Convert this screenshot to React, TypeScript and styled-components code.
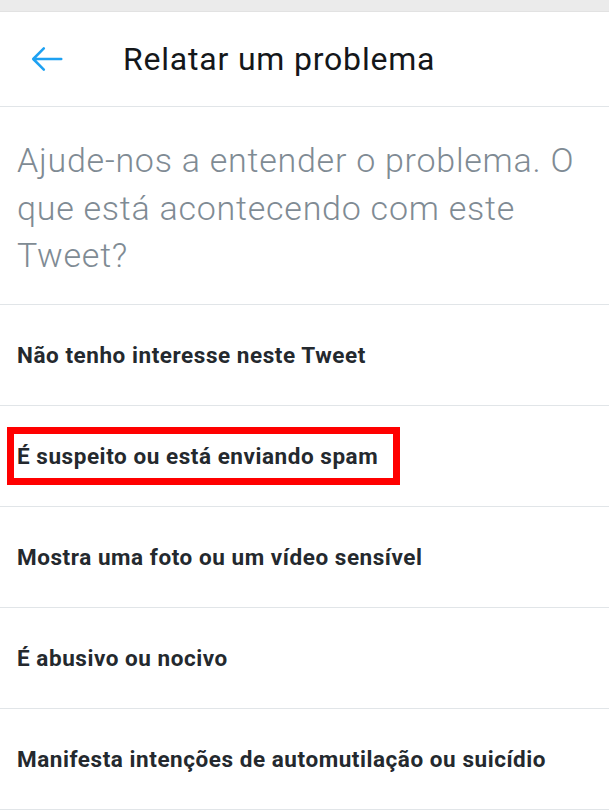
import React from 'react';
import styled, { createGlobalStyle } from 'styled-components';

const GlobalStyle = createGlobalStyle`
  html, body {
    margin: 0;
    padding: 0;
    background: #ffffff;
  }
  body {
    font-family: Roboto, 'Liberation Sans', sans-serif;
  }
`;

const Page = styled.div`
  width: 609px;
  height: 812px;
  overflow: hidden;
  background: #ffffff;
`;

const StatusStrip = styled.div`
  height: 11px;
  background: #ebebeb;
  border-bottom: 1px solid #e2e2e2;
`;

const Header = styled.header`
  display: flex;
  align-items: center;
  height: 94px;
  padding-left: 28px;
  border-bottom: 1px solid #e1e5e8;
`;

const BackButton = styled.button`
  display: flex;
  align-items: center;
  justify-content: center;
  width: 38px;
  height: 38px;
  padding: 0;
  margin: 0 57px 0 0;
  border: none;
  background: none;
  color: #1da1f2;
`;

const Title = styled.h1`
  margin: 0;
  font-size: 32px;
  font-weight: 400;
  color: #14171a;
  letter-spacing: 0.8px;
`;

const Intro = styled.p`
  margin: 0;
  padding: 30px 24px 24px 17px;
  font-size: 34px;
  font-weight: 300;
  line-height: 47.5px;
  letter-spacing: 0.75px;
  color: #7f8b94;
  border-bottom: 1px solid #e1e5e8;
`;

const List = styled.ul`
  margin: 0;
  padding: 0;
  list-style: none;
`;

const Row = styled.li`
  display: flex;
  align-items: center;
  height: 100px;
  padding-left: 17px;
  border-bottom: 1px solid #e1e5e8;
  font-size: 22.5px;
  font-weight: 700;
  letter-spacing: 0.55px;
  color: #24292e;
`;

const Highlight = styled.span`
  margin-left: -10px;
  padding: 0 15px 0 3px;
  line-height: 44px;
  border: 7px solid #ff0000;
`;

const reasons = [
  { label: 'Não tenho interesse neste Tweet' },
  { label: 'É suspeito ou está enviando spam', marked: true },
  { label: 'Mostra uma foto ou um vídeo sensível' },
  { label: 'É abusivo ou nocivo' },
  { label: 'Manifesta intenções de automutilação ou suicídio' },
];

const BackArrow = () => (
  <svg width="38" height="38" viewBox="0 0 24 24" fill="none">
    <path
      d="M21 12H3.6M10 5.3L3.3 12l6.7 6.7"
      stroke="currentColor"
      strokeWidth="1.6"
      strokeLinecap="round"
      strokeLinejoin="round"
    />
  </svg>
);

export default function App() {
  return (
    <Page>
      <GlobalStyle />
      <StatusStrip />
      <Header>
        <BackButton aria-label="Voltar">
          <BackArrow />
        </BackButton>
        <Title>Relatar um problema</Title>
      </Header>
      <Intro>
        Ajude-nos a entender o problema. O que está acontecendo com este
        Tweet?
      </Intro>
      <List>
        {reasons.map((r) => (
          <Row key={r.label}>
            {r.marked ? <Highlight>{r.label}</Highlight> : r.label}
          </Row>
        ))}
      </List>
    </Page>
  );
}
